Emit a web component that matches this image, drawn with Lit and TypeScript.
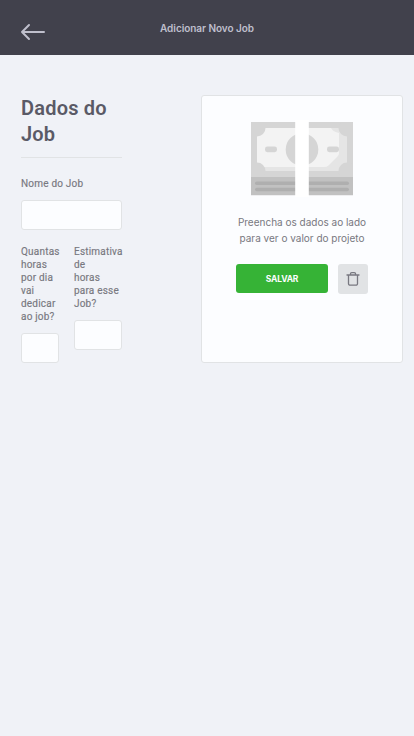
import { LitElement, html, css } from "lit";
import { customElement } from "lit/decorators.js";

@customElement("app-root")
export class AppRoot extends LitElement {
  static styles = css`
    :host { display: block; min-height: 100vh; background: #f0f2f7; font-family: Roboto, sans-serif; color: #787880; }
    * { box-sizing: border-box; }
    header { height: 55px; background: #41414c; display: grid; grid-template-columns: 60px 1fr 60px; align-items: center; padding: 0 20px; }
    .back { display: flex; padding-top: 9px; }
    h1 { margin: 0; padding-top: 1px; text-align: center; font: 600 10px/16px Inter, sans-serif; letter-spacing: -0.05px; color: #bfbfcc; white-space: nowrap; }
    main { display: grid; grid-template-columns: 101px 202px; column-gap: 79px; padding: 40px 0 0 21px; }
    h2 { margin: 0; font: 600 20px/26px Roboto, sans-serif; color: #5a5a66; padding-bottom: 10px; border-bottom: 1px solid #e1e3e5; }
    .title { letter-spacing: 0.2px; }
    .field { display: flex; flex-direction: column; gap: 10px; }
    .name { margin-top: 19px; }
    label { font: 400 10px/13px Roboto, sans-serif; white-space: nowrap; letter-spacing: 0.2px; -webkit-text-stroke: 0.15px #787880; }
    input { width: 100%; height: 30px; min-width: 0; margin: 0; padding: 0 8px; background: #fcfdff; border: 1px solid #e1e3e5; border-radius: 3px; }
    .pair { display: grid; grid-template-columns: 38px 48px; column-gap: 15px; align-items: start; margin-top: 15px; }
    aside { height: 268px; background: #fcfdff; border: 1px solid #e1e3e5; border-radius: 3px; display: flex; flex-direction: column; align-items: center; padding-top: 23px; }
    .money { display: block; }
    p { margin: 16px 0 18px; font: 400 10px/16px Inter, sans-serif; text-align: center; white-space: nowrap; }
    .actions { display: flex; gap: 10px; }
    button { border: 0; padding: 0; border-radius: 3px; display: flex; align-items: center; justify-content: center; }
    .save { width: 92px; height: 29px; background: #36b336; color: #fcfdff; font: 700 8.5px/16px Inter, sans-serif; letter-spacing: -0.2px; }
    .trash { width: 30px; height: 30px; background: #e1e3e5; }
  `;

  render() {
    return html`
      <header>
        <a class="back" aria-label="Voltar">
          <svg width="26" height="18" viewBox="0 0 26 18" fill="none" stroke="#bfbfcc" stroke-width="2" stroke-linecap="round" stroke-linejoin="round"><path d="M24 9H2M9 2L2 9l7 7" /></svg>
        </a>
        <h1>Adicionar Novo Job</h1>
      </header>
      <main>
        <form>
          <h2><span class="title">Dados do<br />Job</span></h2>
          <div class="field name"><label for="name">Nome do Job</label><input id="name" /></div>
          <div class="pair">
            <div class="field"><label for="daily">Quantas<br />horas<br />por dia<br />vai<br />dedicar<br />ao job?</label><input id="daily" /></div>
            <div class="field"><label for="total">Estimativa<br />de<br />horas<br />para esse<br />Job?</label><input id="total" /></div>
          </div>
        </form>
        <aside>
          <svg class="money" width="102" height="79" viewBox="0 -3 102 79">
            <clipPath id="note"><path d="M0 0h102v55H0z" /></clipPath>
            <g clip-path="url(#note)">
              <path fill="#d5d5d5" d="M0 0h102v56H0z" />
              <path fill="#e5e5e5" d="M6 6h90v43H6z" />
              <path fill="#f3f3f3" d="M6 6h74q2 4 8 5V31q0 2-1.5 3.5l-9 9Q76 45 73 45H6z" />
              <g fill="#d5d5d5">
                <circle cx="6" cy="6" r="8.5" /><circle cx="96" cy="6" r="8.5" />
                <circle cx="6" cy="49" r="8.5" /><circle cx="96" cy="49" r="8.5" />
                <circle cx="51" cy="27.5" r="16.3" />
                <rect x="14" y="24.6" width="12" height="5.6" rx="2.4" /><rect x="76" y="24.6" width="12" height="5.6" rx="2.4" />
              </g>
            </g>
            <path fill="#c1c1c1" d="M0 55h102v18.3H0z" />
            <g fill="#afafaf"><rect x="4" y="59.4" width="94" height="3.6" rx="1.8" /><rect x="4" y="65.7" width="94" height="3.6" rx="1.8" /></g>
            <path fill="#fff" d="M44.2-2h13.6v77H44.2z" />
          </svg>
          <p>Preencha os dados ao lado<br />para ver o valor do projeto</p>
          <div class="actions">
            <button class="save" type="button">SALVAR</button>
            <button class="trash" type="button" aria-label="Excluir">
              <svg width="14" height="16" viewBox="0 0 14 16" fill="none" stroke="#787880" stroke-width="1.3" stroke-linecap="round" stroke-linejoin="round"><path d="M1 4h12M2.5 4v8.7a1.5 1.5 0 0 0 1.5 1.5h6a1.5 1.5 0 0 0 1.5-1.5V4M4.5 4V2.8a1.2 1.2 0 0 1 1.2-1.2h2.6a1.2 1.2 0 0 1 1.2 1.2V4" /></svg>
            </button>
          </div>
        </aside>
      </main>
    `;
  }
}
